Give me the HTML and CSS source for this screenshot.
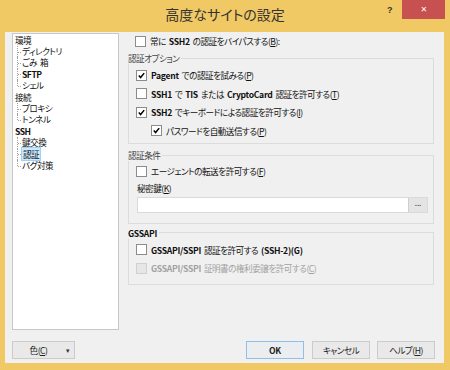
FILE: index.html
```html
<!DOCTYPE html>
<html lang="ja">
<head>
  <meta charset="UTF-8" />
  <title>高度なサイトの設定</title>
  <link rel="stylesheet" href="styles.css">
</head>
<body>
  <div class="window">
    <div class="titlebar">
      <div class="title">高度なサイトの設定</div>
      <div class="controls">
        <span class="help">?</span>
        <span class="close">✕</span>
      </div>
    </div>

    <div class="client">
      <div class="main">
        <ul class="tree">
          <li>環境
            <ul>
              <li>ディレクトリ</li>
              <li>ごみ 箱</li>
              <li class="latin">SFTP</li>
              <li>シェル</li>
            </ul>
          </li>
          <li>接続
            <ul>
              <li>プロキシ</li>
              <li>トンネル</li>
            </ul>
          </li>
          <li class="latin">SSH
            <ul>
              <li>鍵交換</li>
              <li><span class="selected">認証</span></li>
              <li>バグ対策</li>
            </ul>
          </li>
        </ul>

        <div class="pane">
          <label class="row bypass">
            <span class="cb"></span>
            <span>常に <b>SSH2</b> の認証をバイパスする(<u>B</u>):</span>
          </label>

          <fieldset class="group group-options">
            <legend>認証オプション</legend>
            <label class="row">
              <span class="cb checked"><svg viewBox="0 0 11 11"><path d="M2.2 5.6 L4.4 8 L8.8 2.6" /></svg></span>
              <span><b>Pagent</b> での認証を試みる(<u>P</u>)</span>
            </label>
            <label class="row">
              <span class="cb"></span>
              <span><b>SSH1</b> で <b>TIS</b> または <b>CryptoCard</b> 認証を許可する(<u>T</u>)</span>
            </label>
            <label class="row">
              <span class="cb checked"><svg viewBox="0 0 11 11"><path d="M2.2 5.6 L4.4 8 L8.8 2.6" /></svg></span>
              <span><b>SSH2</b> でキーボードによる認証を許可する(<u>I</u>)</span>
            </label>
            <label class="row sub">
              <span class="cb checked"><svg viewBox="0 0 11 11"><path d="M2.2 5.6 L4.4 8 L8.8 2.6" /></svg></span>
              <span>パスワードを自動送信する(<u>P</u>)</span>
            </label>
          </fieldset>

          <fieldset class="group group-cond">
            <legend>認証条件</legend>
            <label class="row">
              <span class="cb"></span>
              <span>エージェントの転送を許可する(<u>F</u>)</span>
            </label>
            <div class="field-label">秘密鍵(<u>K</u>)</div>
            <div class="keyfield">
              <span class="keyinput"></span>
              <span class="browse">...</span>
            </div>
          </fieldset>

          <fieldset class="group group-gss">
            <legend><b>GSSAPI</b></legend>
            <label class="row">
              <span class="cb"></span>
              <span><b>GSSAPI/SSPI</b> 認証を許可する <b>(SSH-2)(G)</b></span>
            </label>
            <label class="row disabled">
              <span class="cb"></span>
              <span><b>GSSAPI/SSPI</b> 証明書の権利委譲を許可する(<u>C</u>)</span>
            </label>
          </fieldset>
        </div>
      </div>

      <div class="buttons">
        <button class="btn color-btn"><span>色(<u>C</u>)</span><span class="arrow">▾</span></button>
        <button class="btn default"><b>OK</b></button>
        <button class="btn">キャンセル</button>
        <button class="btn">ヘルプ(<u>H</u>)</button>
      </div>
    </div>
  </div>
</body>
</html>
```

FILE: styles.css
```css
body {
  margin: 0;
  background-color: #f0c864;
  font-family: "Noto Sans CJK JP", sans-serif;
  font-size: 8.6px;
  letter-spacing: -0.5px;
  word-spacing: 1.5px;
  font-feature-settings: "palt";
  color: #111;
}
.window {
  width: 450px;
  height: 370px;
  background-color: #f0c864;
}
.titlebar {
  height: 32px;
  display: grid;
}
.title, .controls {
  grid-area: 1 / 1;
}
.title {
  text-align: center;
  font-size: 14px;
  line-height: 14px;
  letter-spacing: 0;
  padding-top: 7px;
  color: #333;
}
.controls {
  display: flex;
  justify-content: flex-end;
  align-items: flex-start;
  padding-right: 5px;
}
.help {
  font-family: "Liberation Sans", sans-serif;
  font-weight: bold;
  font-size: 9px;
  color: #333;
  margin-top: 5px;
  margin-right: 10px;
}
.close {
  width: 43px;
  height: 19px;
  background-color: #c75050;
  color: #fff;
  font-family: "DejaVu Sans", sans-serif;
  font-size: 8px;
  font-weight: bold;
  display: flex;
  align-items: center;
  justify-content: center;
}
.client {
  margin: 0 6px 0 5px;
  height: 331px;
  box-sizing: border-box;
  background-color: #f0f0f0;
  padding: 1px 0 4px 7px;
}
.main {
  display: flex;
  height: 297px;
}
b {
  font-weight: 600;
  letter-spacing: -0.3px;
}

/* tree */
.tree {
  list-style: none;
  margin: 0;
  padding: 0.5px 0 0 2px;
  width: 107px;
  box-sizing: border-box;
  background-color: #fff;
  border: 1px solid #c8c8c8;
  line-height: 11.4px;
}
.tree ul {
  list-style: none;
  margin: 0;
  padding: 0;
}
.tree ul li {
  position: relative;
  padding-left: 7px;
}
.tree ul li::before {
  content: "";
  position: absolute;
  left: 2px;
  top: 0;
  bottom: 0;
  border-left: 1px dotted #a0a0a0;
}
.tree ul li:last-child::before {
  bottom: 50%;
}
.tree ul li::after {
  content: "";
  position: absolute;
  left: 3px;
  top: 50%;
  width: 3px;
  border-top: 1px dotted #a0a0a0;
}
.latin {
  font-weight: 600;
}
.latin ul {
  font-weight: normal;
}
.selected {
  background-color: #cce8ff;
  border: 1px solid #99d1ff;
  margin-left: -1px;
  padding: 0 1px;
}

/* right pane */
.pane {
  margin-left: 9px;
  width: 306px;
  display: flex;
  flex-direction: column;
}
.row {
  display: flex;
  align-items: center;
  gap: 4px;
  height: 18.5px;
}
.bypass {
  height: 16px;
  margin-left: 7px;
}
.sub {
  margin-left: 15px;
}
.cb {
  width: 11px;
  height: 11px;
  box-sizing: border-box;
  border: 1px solid #8c8c8c;
  background-color: #fff;
  flex-shrink: 0;
  display: flex;
}
.cb svg {
  width: 9px;
  height: 9px;
}
.cb path {
  fill: none;
  stroke: #000;
  stroke-width: 1.8;
}
.disabled {
  color: #a2a2a2;
}
.disabled .cb {
  background-color: #e6e6e6;
  border-color: #d0d0d0;
}
.group {
  margin: 3px 0 0;
  border: 1px solid #dcdcdc;
  padding: 2px 5px 3px 7px;
  min-width: 0;
}
.group legend {
  padding: 0 2px 0 0;
  margin-left: -8px;
  line-height: 12px;
  color: #444;
}
.group-cond {
  margin-top: 5px;
  padding-top: 1px;
  padding-bottom: 10px;
}
.group-gss {
  padding-bottom: 6px;
}
.group-gss legend {
  color: #111;
}
.field-label {
  height: 15px;
  line-height: 15px;
  padding-left: 1px;
}
.keyfield {
  display: flex;
  height: 16px;
  margin: 1px 0 0 1px;
  box-sizing: border-box;
  border: 1px solid #dadada;
}
.keyinput {
  flex: 1;
  background-color: #fff;
}
.browse {
  width: 19px;
  background-color: #e4e4e4;
  border-left: 1px solid #cfcfcf;
  font-family: "Liberation Sans", sans-serif;
  font-size: 8px;
  font-weight: bold;
  letter-spacing: 0;
  color: #555;
  display: flex;
  justify-content: center;
  align-items: center;
  padding-bottom: 2px;
  box-sizing: border-box;
}

/* bottom buttons */
.buttons {
  display: flex;
  margin-top: 11px;
  height: 18px;
  padding-right: 9px;
}
.btn {
  font-family: inherit;
  font-size: 8.6px;
  letter-spacing: -0.5px;
  font-feature-settings: "palt";
  color: #222;
  width: 58px;
  height: 18px;
  padding: 0;
  background-color: #e9e9e9;
  border: 1px solid #cbcbcb;
  margin-left: 7px;
}
.btn.default {
  margin-left: auto;
  border-color: #8ec0ea;
  background-color: #ebeef1;
}
.btn.default + .btn {
  margin-left: 8px;
}
.color-btn {
  width: 63px;
  margin-left: 0;
  display: flex;
  align-items: center;
}
.color-btn span:first-child {
  flex: 1;
  text-align: center;
  padding-left: 2px;
}
.arrow {
  font-size: 7px;
  width: 12px;
  color: #333;
}
```
